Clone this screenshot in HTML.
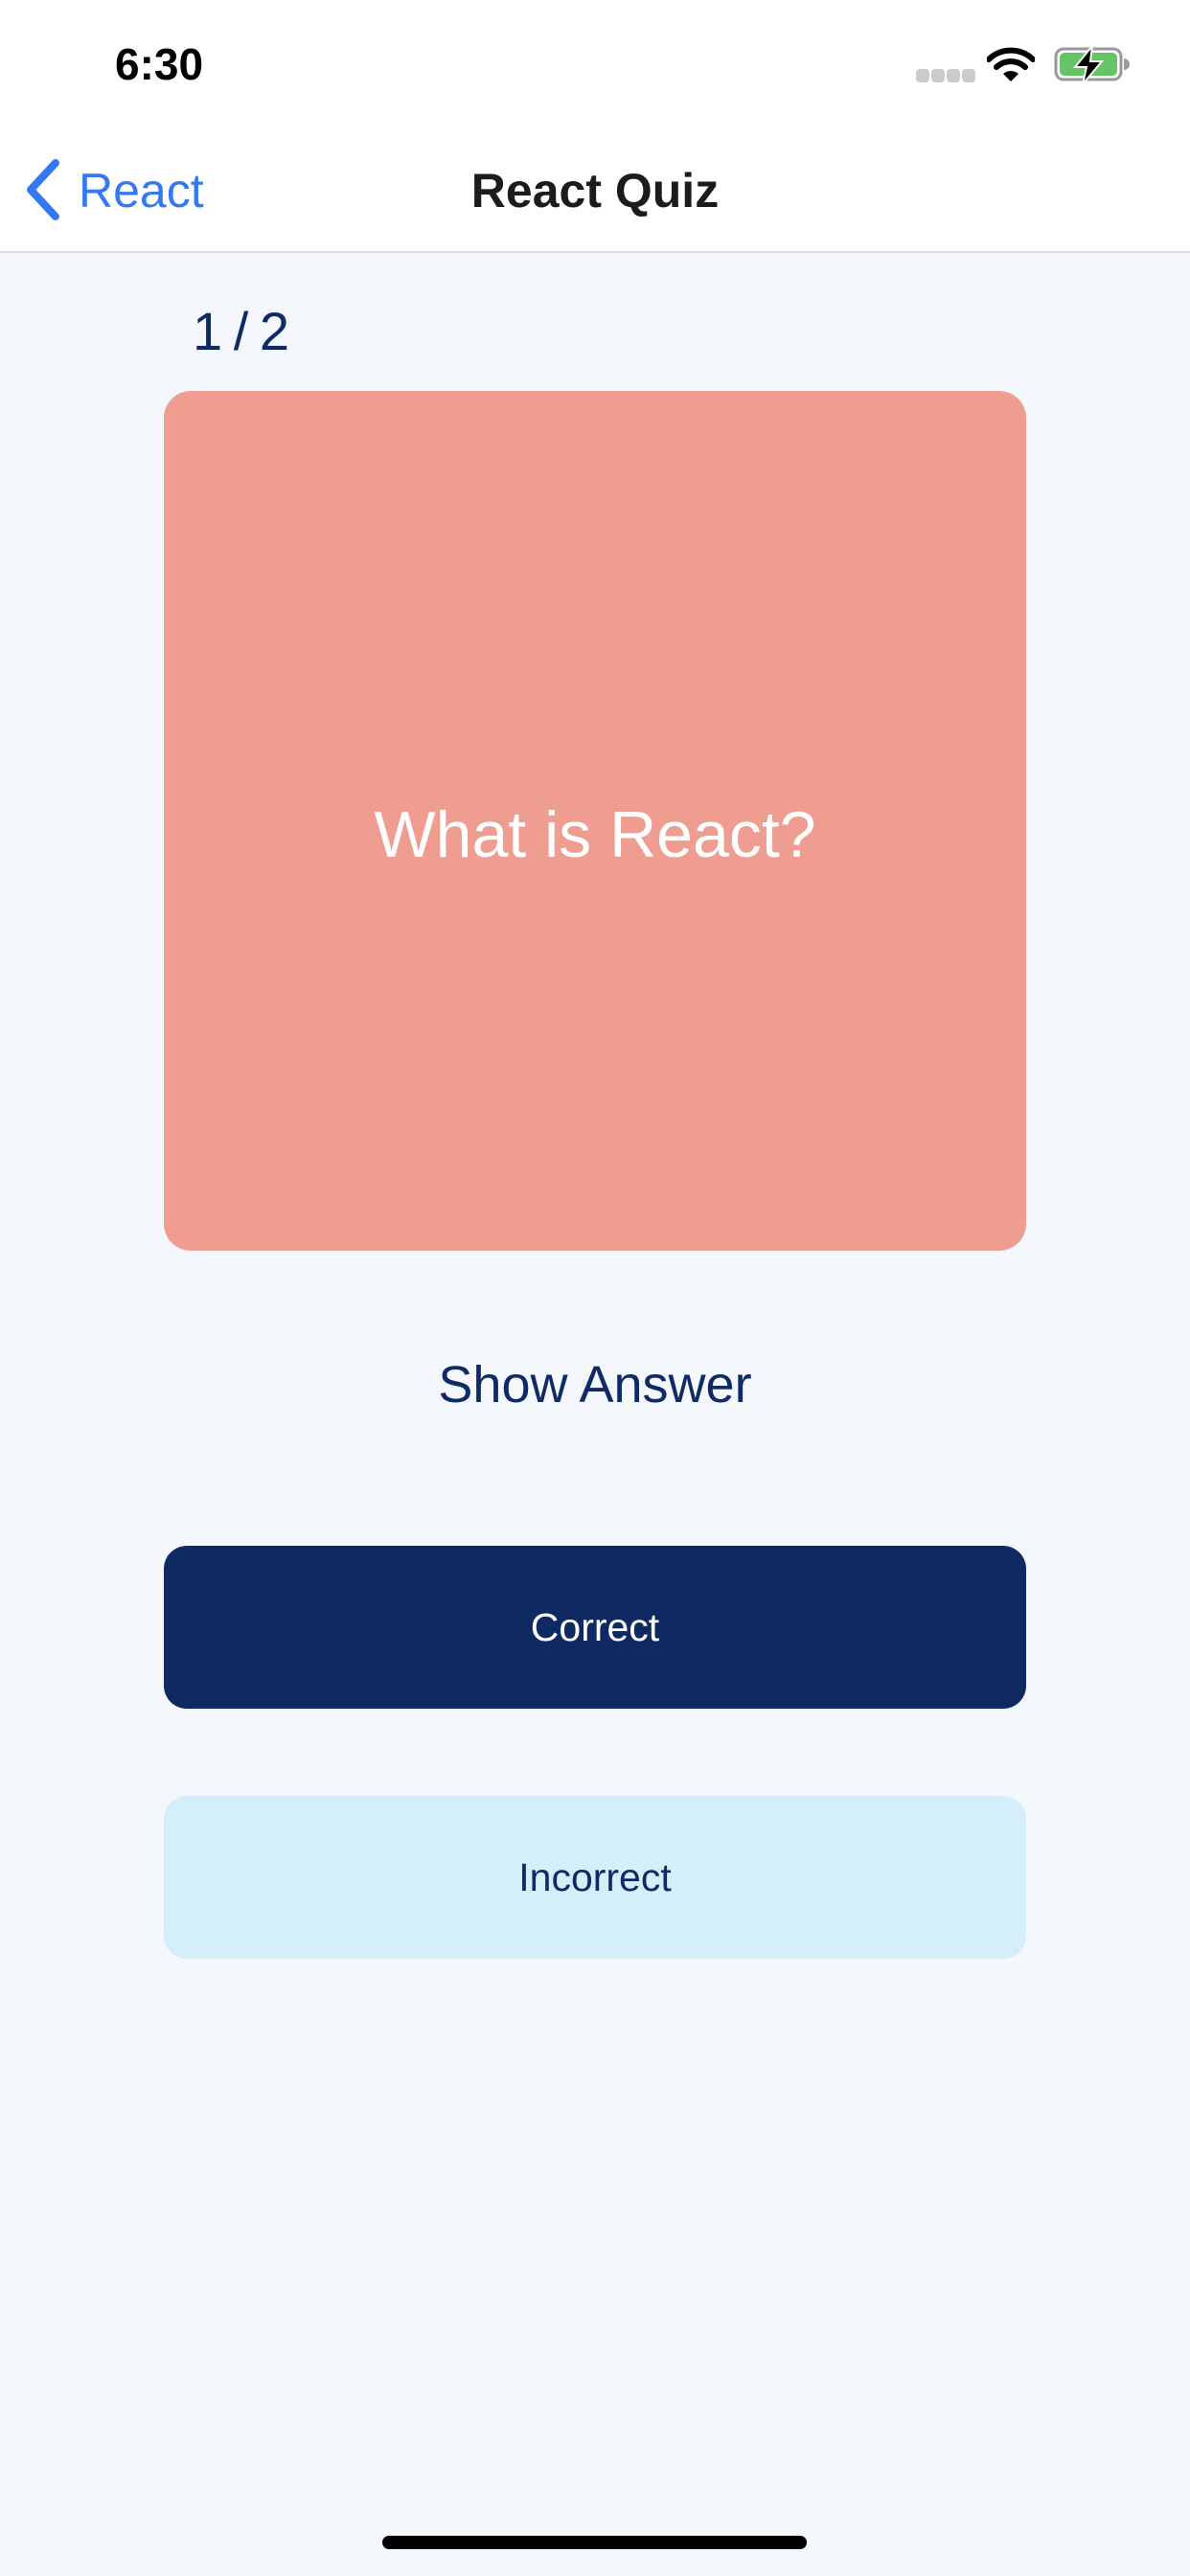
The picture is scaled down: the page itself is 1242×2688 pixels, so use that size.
<!DOCTYPE html>
<html><head><meta charset="utf-8"><style>
*{margin:0;padding:0;box-sizing:border-box}
body{width:1242px;height:2688px;background:#F4F7FC;font-family:"Liberation Sans",sans-serif;position:relative;overflow:hidden}
.abs{position:absolute}
.c{text-align:center;width:1242px;left:0}
</style></head><body>
<div class="abs" style="left:0;top:0;width:1242px;height:264px;background:#fff;border-bottom:2px solid #DADCE0"></div>
<div class="abs" style="left:120px;top:40px;font-size:46px;font-weight:bold;color:#000">6:30</div>
<div class="abs" style="left:956px;top:72px;width:14px;height:14px;border-radius:4px;background:#cbcbcb"></div>
<div class="abs" style="left:972px;top:72px;width:14px;height:14px;border-radius:4px;background:#cbcbcb"></div>
<div class="abs" style="left:988px;top:72px;width:14px;height:14px;border-radius:4px;background:#cbcbcb"></div>
<div class="abs" style="left:1004px;top:72px;width:14px;height:14px;border-radius:4px;background:#cbcbcb"></div>
<svg class="abs" style="left:1030px;top:48px" width="50" height="40" viewBox="0 0 50 40">
<path d="M2 14 A33 33 0 0 1 48 14" stroke="#000" stroke-width="6" fill="none" stroke-linecap="round"/>
<path d="M10 22 A22 22 0 0 1 40 22" stroke="#000" stroke-width="6" fill="none" stroke-linecap="round"/>
<path d="M17 29 L25 37 L33 29 A12 12 0 0 0 17 29Z" fill="#000"/>
</svg>
<svg class="abs" style="left:1100px;top:46px" width="80" height="44" viewBox="0 0 80 44">
<rect x="2" y="5" width="68" height="32" rx="8" fill="none" stroke="#999" stroke-width="3"/>
<rect x="6" y="9" width="60" height="24" rx="5" fill="#65C466"/>
<path d="M73 15 v12 a6 6 0 0 0 0 -12z" fill="#999"/>
<path d="M40 2 L22 24 H34 L30 42 L50 18 H38 Z" fill="#000" stroke="#fff" stroke-width="2"/>
</svg>
<svg class="abs" style="left:24px;top:164px" width="42" height="68" viewBox="0 0 42 68">
<path d="M34 6 L8 34 L34 62" stroke="#3478F6" stroke-width="8" fill="none" stroke-linecap="round" stroke-linejoin="round"/>
</svg>
<div class="abs" style="left:82px;top:170px;font-size:50px;color:#3478F6">React</div>
<div class="abs c" style="top:170px;font-size:50px;font-weight:bold;color:#1c1c1e">React Quiz</div>
<div class="abs" style="left:201px;top:313px;font-size:56px;color:#0F2A66;letter-spacing:-2px">1 / 2</div>
<div class="abs" style="left:171px;top:408px;width:900px;height:897px;border-radius:28px;background:#EE9D90;display:flex;align-items:center;justify-content:center;color:#fff;font-size:68px;padding-top:28px">What is React?</div>
<div class="abs c" style="top:1414px;font-size:54px;color:#0F2A66">Show Answer</div>
<div class="abs" style="left:171px;top:1613px;width:900px;height:170px;border-radius:24px;background:#0F2963;display:flex;align-items:center;justify-content:center;color:#fff;font-size:41px">Correct</div>
<div class="abs" style="left:171px;top:1874px;width:900px;height:170px;border-radius:24px;background:#D4EFFA;display:flex;align-items:center;justify-content:center;color:#0F2A66;font-size:41px">Incorrect</div>
<div class="abs" style="left:399px;top:2646px;width:443px;height:14px;border-radius:7px;background:#000"></div>
</body></html>
